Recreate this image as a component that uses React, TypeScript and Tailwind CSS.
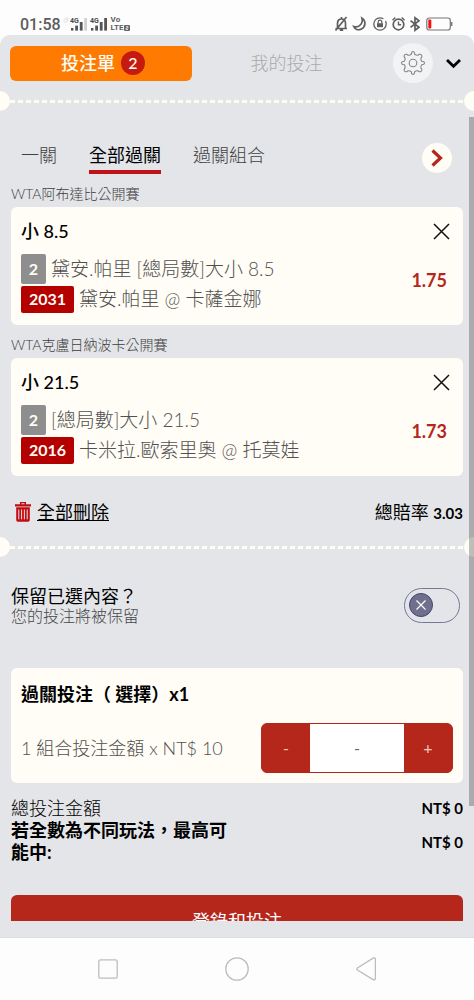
import { useState, type ReactNode } from "react";

type Bet = {
  league: string;
  pick: string;
  market: string;
  code: string;
  match: string;
  odds: string;
};

const bets: Bet[] = [
  {
    league: "WTA阿布達比公開賽",
    pick: "小 8.5",
    market: "黛安.帕里 [總局數]大小 8.5",
    code: "2031",
    match: "黛安.帕里 @ 卡薩金娜",
    odds: "1.75",
  },
  {
    league: "WTA克盧日納波卡公開賽",
    pick: "小 21.5",
    market: "[總局數]大小 21.5",
    code: "2016",
    match: "卡米拉.歐索里奧 @ 托莫娃",
    odds: "1.73",
  },
];

function Signal({ last }: { last: string }) {
  return (
    <svg width="17" height="14" viewBox="0 0 17 14" aria-hidden="true">
      <text x="0" y="6" fontSize="7" fontWeight="700" fill="#4a4a4a" fontFamily="Roboto, sans-serif">4G</text>
      <rect x="1" y="11" width="2.4" height="2.6" fill="#555" />
      <rect x="5.200" y="8.600" width="2.800" height="5" fill="#555" />
      <rect x="9.800" y="5" width="2.800" height="8.600" fill="#555" />
      <rect x="14.200" y="1" width="2.800" height="12.600" fill={last} />
    </svg>
  );
}

function StatusBar() {
  return (
    <div className="flex h-[35px] shrink-0 items-end justify-between bg-[#fdfdfd] pr-[21px] pb-[3px] pl-[20px] text-[#5c5c5c]">
      <div className="flex h-[16px] items-center">
        <span className="pt-[2px] font-[Roboto,sans-serif] text-[16px] leading-[16px] font-medium">01:58</span>
        <svg className="mr-[1px] ml-[2px]" width="6" height="14" viewBox="0 0 6 14" aria-hidden="true">
          <path d="M1 2h3v3H1zM3 1h2v3" fill="none" stroke="#ddd" strokeWidth="0.8" />
        </svg>
        <Signal last="#d0d0d0" />
        <span className="w-[3px]" />
        <Signal last="#555" />
        <span className="ml-[4px] flex flex-col font-[Roboto,sans-serif] text-[8px] leading-[8px] font-bold">
          <span>Vo</span>
          <span className="flex items-center">
            LTE
            <svg width="6" height="6" viewBox="0 0 6 6" aria-hidden="true">
              <rect width="6" height="6" rx="1" fill="#666" />
              <path d="M2 1.6h2V3H2v1.5h2" fill="none" stroke="#fff" strokeWidth="0.7" />
            </svg>
          </span>
        </span>
      </div>
      <svg width="119" height="16" viewBox="0 0 119 16" fill="none" stroke="#5f5f5f" strokeWidth="1.7" aria-hidden="true">
        <path d="M1.500 12.500h11.500M3.500 12.500V7.500C3.500 4.500 5 3 7.500 3s4 1.500 4 4.500v5M7.500 1V3M1.500 14.500 12.500 1M5.800 14.200h3.400" />
        <path d="M28 2.200c4.500 3 3.500 9-1 11-3 1.300-6 .3-7.300-2.700 2.300.8 4.800.3 6.500-1.500 1.900-1.900 2.500-4.300 1.800-6.800Z" />
        <circle cx="46" cy="8" r="6.200" strokeWidth="1.300" strokeDasharray="32 3" />
        <rect x="43" y="7.200" width="6" height="4" fill="#5f5f5f" stroke="none" />
        <path d="M44.200 7.500V6a1.800 1.800 0 0 1 3.600 0v1.500" strokeWidth="1.200" />
        <circle cx="64.500" cy="8.500" r="5.300" />
        <path d="M64.500 5.500v3.300h2.600M58.500 4.200l2.800-2.700M70.500 4.200l-2.800-2.700" strokeWidth="1.400" />
        <path d="m76.500 4.700 8.500 6.600-4 3V1.700l4 3-8.500 6.600" strokeWidth="1.700" />
        <rect x="92.800" y="2" width="23.500" height="12" rx="2.500" stroke="#777" strokeWidth="1.200" />
        <path d="M117.700 6v4" stroke="#777" strokeWidth="1.400" />
        <rect x="94.300" y="3.500" width="3" height="9" rx="1" fill="#f31212" stroke="none" />
      </svg>
    </div>
  );
}

function TicketDivider() {
  return (
    <div className="flex h-[20px] items-center overflow-hidden">
      <span className="-ml-[10px] size-[20px] shrink-0 rounded-full bg-[#fffdf5]" />
      <span className="h-[3px] flex-1 bg-[repeating-linear-gradient(90deg,#fffdf0_0px,#fffdf0_5px,transparent_5px,transparent_8px)]" />
      <span className="-mr-[10px] size-[20px] shrink-0 rounded-full bg-[#fffdf5]" />
    </div>
  );
}

function Header() {
  return (
    <header className="flex h-[56px] shrink-0 items-center pr-[12px] pl-[10px]">
      <button className="flex h-[35px] w-[182px] items-center justify-center gap-[6px] rounded-[6px] bg-[#ff7a00] pl-[4px] text-[18px] leading-[24px] font-medium text-[#fffdf5]">
        投注單
        <span className="flex size-[24px] items-center justify-center rounded-full bg-[#c41a10] text-[16px] leading-[24px]">2</span>
      </button>
      <button className="flex-1 pr-[12px] text-center text-[18px] leading-[24px] font-light text-[#a9aaac]">我的投注</button>
      <button aria-label="設定" className="flex size-[40px] items-center justify-center rounded-full bg-[#f2f3f5]">
        <svg width="26" height="26" viewBox="0 0 26 26" fill="none" stroke="#85868a" strokeWidth="1.100" strokeLinejoin="round" aria-hidden="true">
          <circle cx="13" cy="13" r="3.800" />
          <path d="M11.300 4.300 11.700 2.300Q13 .8 14.300 2.300L14.700 4.300Q16.500 5.500 17.900 5.200L19.300 4.200Q21.800 4 21.900 6.600L20.900 8.200Q20.600 9.800 21.700 11.300L23.700 11.700Q25.200 13 23.700 14.300L21.700 14.700Q20.500 16.500 20.900 17.900L21.900 19.400Q21.800 22 19.300 21.800L17.900 20.800Q16.200 20.500 14.700 21.700L14.300 23.700Q13 25.200 11.700 23.700L11.300 21.700Q9.500 20.500 8.100 20.800L6.700 21.800Q4.200 22 4.100 19.400L5.100 17.900Q5.400 16.200 4.300 14.700L2.300 14.300Q.8 13 2.300 11.700L4.300 11.300Q5.500 9.500 5.100 8.200L4.100 6.600Q4.200 4 6.700 4.200L8.100 5.200Q9.800 5.500 11.300 4.300Z" />
        </svg>
      </button>
      <button aria-label="收起" className="ml-[12px] pt-[2px]">
        <svg width="17" height="12" viewBox="0 0 17 12" fill="none" stroke="#000" strokeWidth="2.800" aria-hidden="true">
          <path d="m2 2 6.500 6.300L15 2" />
        </svg>
      </button>
    </header>
  );
}

function Tab({ active, onClick, children }: { active: boolean; onClick: () => void; children: ReactNode }) {
  return (
    <button
      role="tab"
      aria-selected={active}
      onClick={onClick}
      className={
        active
          ? "border-b-4 border-[#c1121a] pb-[3px] text-black"
          : "border-b-4 border-transparent pb-[3px] font-light text-[#3f4042]"
      }
    >
      {children}
    </button>
  );
}

function BetCard({ bet }: { bet: Bet }) {
  return (
    <section>
      <h2 className="h-[26px] text-[14px] leading-[26px] font-light text-[#3c3d40]">{bet.league}</h2>
      <div className="rounded-[6px] bg-[#fffdf5] pt-[12px] pr-[12px] pb-[12px] pl-[10px]">
        <div className="flex h-[24px] items-center justify-between">
          <h3 className="text-[18px] leading-[24px] font-medium text-black">{bet.pick}</h3>
          <button aria-label="移除" className="pr-[1px]">
            <svg width="17" height="17" viewBox="0 0 17 17" stroke="#111" strokeWidth="1.500" aria-hidden="true">
              <path d="m1 1 15 15M16 1 1 16" />
            </svg>
          </button>
        </div>
        <div className="mt-[10px] flex items-center justify-between">
          <div className="text-[19px] leading-[28px] font-light text-[#505050]">
            <div className="flex h-[32px] items-center gap-[5px]">
              <span className="flex h-[30px] w-[25px] items-center justify-center rounded-[2px] bg-[#8e8e8e] text-[16px] font-bold text-[#fffdf5]">2</span>
              {bet.market}
            </div>
            <div className="flex h-[28px] items-center gap-[5px]">
              <span className="flex h-[27px] w-[53px] items-center justify-center rounded-[2px] bg-[#b50000] text-[16px] font-bold text-[#fffdf5]">{bet.code}</span>
              {bet.match}
            </div>
          </div>
          <span className="pr-[4px] pb-[6px] text-[18px] leading-[24px] font-bold text-[#b5261b]">{bet.odds}</span>
        </div>
      </div>
    </section>
  );
}

function KeepToggle() {
  const [on, setOn] = useState(false);
  return (
    <label className="mr-[3px] flex h-[35px] w-[56px] cursor-pointer items-center rounded-full border border-[#77759c] px-[4px]">
      <input type="checkbox" aria-label="保留已選內容" checked={on} onChange={() => setOn(!on)} className="peer sr-only" />
      <span className="flex size-[24px] items-center justify-center rounded-full border border-[#47456f] bg-[#706f8e] peer-checked:ml-auto">
        <svg width="10" height="10" viewBox="0 0 10 10" stroke="#fff" strokeWidth="1.200" aria-hidden="true">
          <path d="m.5.5 9 9M9.500.5l-9 9" />
        </svg>
      </span>
    </label>
  );
}

function StakeCard() {
  const [stake, setStake] = useState(0);
  return (
    <section className="mt-[42px] rounded-[6px] bg-[#fffdf5] pt-[14px] pr-[10px] pb-[10px] pl-[10px]">
      <h3 className="text-[18px] leading-[24px] font-bold text-black">過關投注（ 選擇）x1</h3>
      <div className="mt-[17px] flex items-center justify-between">
        <label htmlFor="stake" className="text-[18px] font-light text-[#505050]">1 組合投注金額 x NT$ 10</label>
        <div className="flex h-[50px] w-[192px] overflow-hidden rounded-[6px] border border-[#b5261b] bg-[#b5261b] text-[16px] text-[#f0c8c0]">
          <button aria-label="減少" className="w-[48px]" onClick={() => setStake(Math.max(0, stake - 10))}>-</button>
          <input
            id="stake"
            readOnly
            value={stake === 0 ? "-" : String(stake)}
            className="min-w-0 flex-1 bg-white text-center text-[#666] outline-none"
          />
          <button aria-label="增加" className="w-[48px]" onClick={() => setStake(stake + 10)}>+</button>
        </div>
      </div>
    </section>
  );
}

function NavBar() {
  return (
    <nav className="flex h-[63px] shrink-0 items-center justify-center gap-[107px] border-t border-[#dcdcdd] bg-[#fdfdfd]">
      <button aria-label="最近使用">
        <svg width="20" height="20" viewBox="0 0 20 20" fill="none" stroke="#bdbdbd" strokeWidth="1.300">
          <rect x=".8" y=".8" width="18.400" height="18.400" rx="1.800" />
        </svg>
      </button>
      <button aria-label="主畫面">
        <svg width="24" height="24" viewBox="0 0 24 24" fill="none" stroke="#bdbdbd" strokeWidth="1.300">
          <circle cx="12" cy="12" r="11.200" />
        </svg>
      </button>
      <button aria-label="返回">
        <svg width="20" height="24" viewBox="0 0 20 24" fill="none" stroke="#bdbdbd" strokeWidth="1.300">
          <path d="M17.500.9 1.400 10.900Q.2 12 1.400 13.100L17.500 22.800Q19.300 23.400 19.400 21.600V2.200Q19.300.4 17.500.9Z" />
        </svg>
      </button>
    </nav>
  );
}

export default function App() {
  const [tab, setTab] = useState(1);
  const tabs = ["一關", "全部過關", "過關組合"];

  return (
    <div className="flex h-screen flex-col bg-[#fdfdfd] font-[Lato,'Noto_Sans_CJK_TC',sans-serif] text-black">
      <StatusBar />
      <main className="flex min-h-0 flex-1 flex-col rounded-t-[10px] bg-[#e4e5e8] pb-[16px]">
        <Header />
        <TicketDivider />
        <div className="relative min-h-0 flex-1">
          <div className="h-full overflow-y-auto [scrollbar-width:none]">
            <div className="flex items-start justify-between pt-[32px] pr-[22px] pl-[21px]">
              <div role="tablist" className="flex gap-[32px] text-[18px] leading-[24px]">
                {tabs.map((name, i) => (
                  <Tab key={name} active={tab === i} onClick={() => setTab(i)}>
                    {name}
                  </Tab>
                ))}
              </div>
              <button aria-label="下一頁" className="flex size-[30px] items-center justify-center rounded-full bg-[#fffdf5]">
                <svg width="12" height="18" viewBox="0 0 12 18" fill="none" stroke="#b5261b" strokeWidth="3.200" aria-hidden="true">
                  <path d="m1.500 1.500 8 7.500-8 7.500" />
                </svg>
              </button>
            </div>

            <div className="mt-[7px] flex flex-col gap-[7px] px-[11px]">
              {bets.map((bet) => (
                <BetCard key={bet.code} bet={bet} />
              ))}
            </div>

            <div className="mt-[24px] flex h-[24px] items-center justify-between pr-[11px] pl-[15px] text-[18px] leading-[24px]">
              <button className="flex items-center gap-[6px]">
                <svg width="16" height="20" viewBox="0 0 16 20" fill="#c00d14" aria-hidden="true">
                  <path fillRule="evenodd" d="M5 0h6v2.300h5V4.500H0V2.300h5ZM6.500 1.200v1.100h3V1.200Z" />
                  <path d="M1.200 5.300h13.600V18q0 1.800-1.800 1.800H3q-1.800 0-1.800-1.800Z" />
                  <path d="M3.800 7.500v9.800M6.600 7.500v9.800M9.400 7.500v9.800M12.200 7.500v9.800" stroke="#e9dfe1" strokeWidth="1" />
                </svg>
                <span className="underline">全部刪除</span>
              </button>
              <span>
                總賠率 <b className="text-[15px]">3.03</b>
              </span>
            </div>

            <div className="mt-[13px]">
              <TicketDivider />
            </div>

            <div className="px-[11px]">
              <div className="mt-[27px] flex items-center justify-between">
                <div className="pt-[2px]">
                  <p className="text-[18px] leading-[20px]">保留已選內容？</p>
                  <p className="text-[16px] leading-[20px] font-light text-[#46474a]">您的投注將被保留</p>
                </div>
                <KeepToggle />
              </div>

              <StakeCard />

              <dl className="mt-[14px] grid grid-cols-[1fr_auto] items-center text-[18px] leading-[22px]">
                <dt className="font-light">總投注金額</dt>
                <dd className="text-[15px] font-bold">NT$ 0</dd>
                <dt className="max-w-[226px] font-bold">若全數為不同玩法，最高可能中:</dt>
                <dd className="pt-[2px] text-[15px] font-bold">NT$ 0</dd>
              </dl>

              <button className="mt-[32px] h-[52px] w-full rounded-[6px] bg-[#b5261b] text-[18px] leading-[24px] text-white">登錄和投注</button>
            </div>
          </div>
          <div className="pointer-events-none absolute top-[6px] right-0 h-[85%] w-[5px] bg-black/25" />
        </div>
      </main>
      <NavBar />
    </div>
  );
}
